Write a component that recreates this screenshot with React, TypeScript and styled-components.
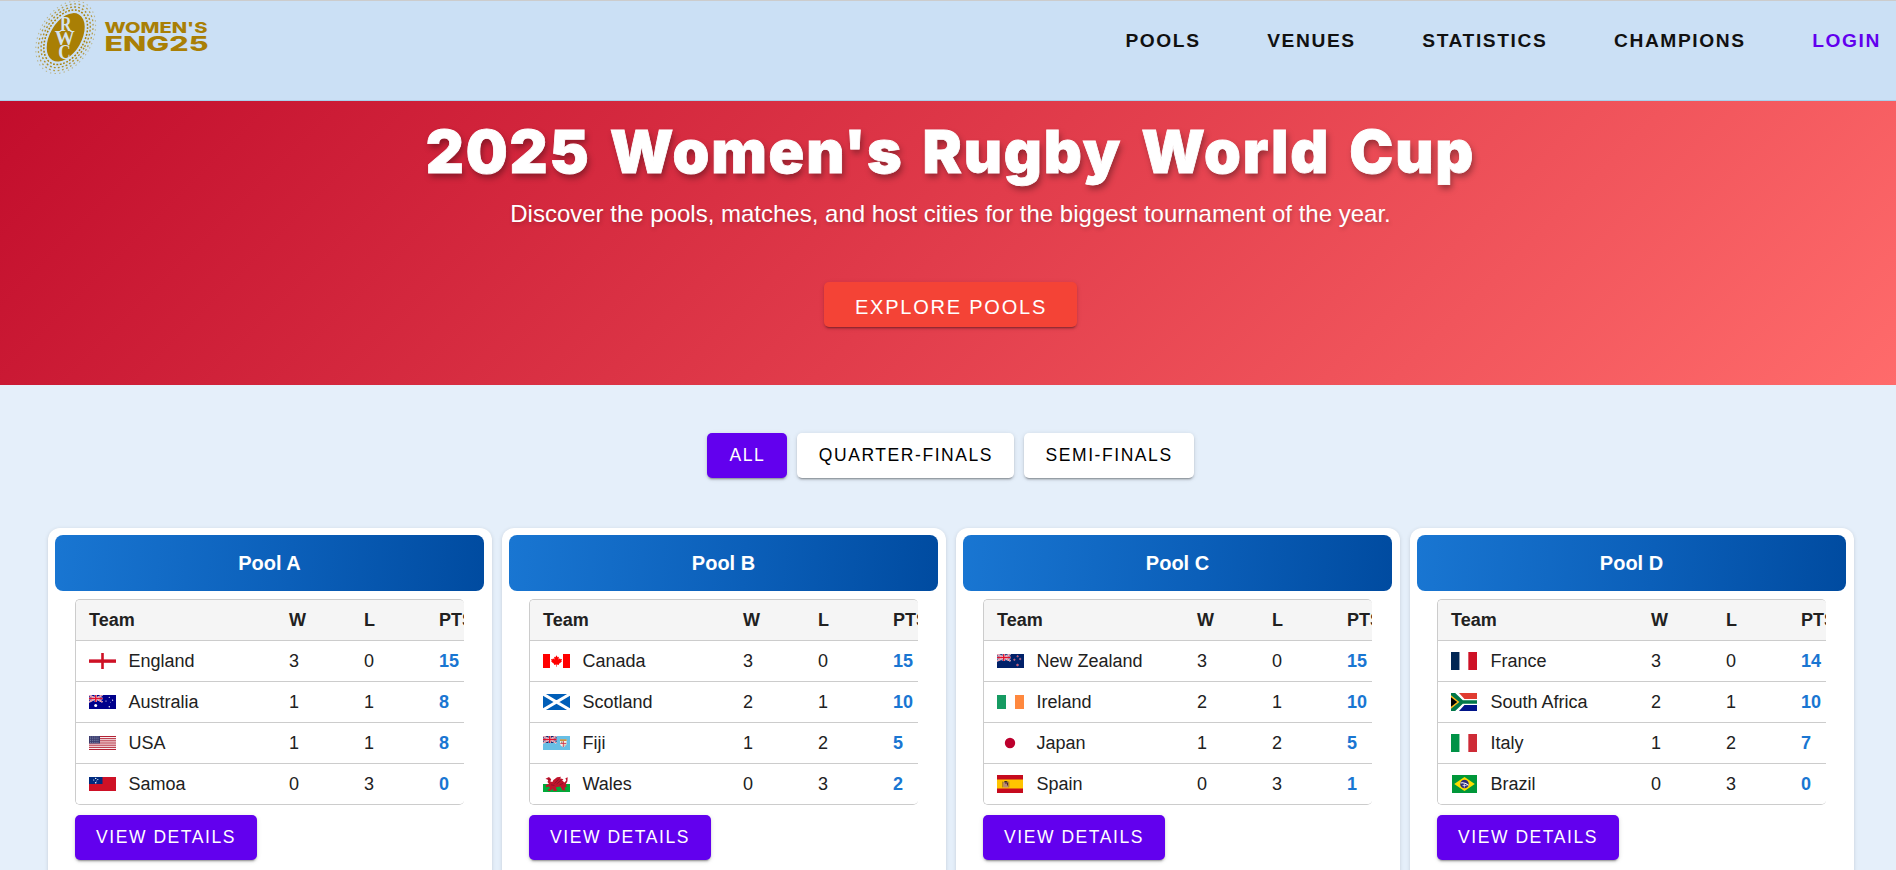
import React from 'react';
import styled, { createGlobalStyle } from 'styled-components';

const sans = `'Liberation Sans', Arial, Helvetica, sans-serif`;
const gold = '#a97f05';

const GlobalStyle = createGlobalStyle`
  *, *::before, *::after { box-sizing: border-box; }
  html, body { margin: 0; padding: 0; overflow: hidden; background: #e5effa; }
  body { font-family: ${sans}; color: #212121; }
`;

const Page = styled.div`
  width: 1901px;
  height: 870px;
  overflow: hidden;
  background: #e5effa;
`;

const Header = styled.header`
  display: flex;
  justify-content: space-between;
  align-items: flex-start;
  height: 101px;
  padding: 0 20px 0 33px;
  background: #cbe0f5;
  border-top: 1px solid #cccccc;
  border-bottom: 1px solid #a9d0ea;
`;

const Nav = styled.nav`
  display: flex;
  gap: 66.6px;
  padding-top: 26px;
`;

const NavLink = styled.a<{ $accent?: boolean }>`
  font-size: 19.2px;
  line-height: 27px;
  font-weight: 700;
  letter-spacing: 1.6px;
  color: ${(p) => (p.$accent ? '#6200ee' : '#111111')};
`;

const Hero = styled.section`
  display: flex;
  flex-direction: column;
  align-items: center;
  height: 284px;
  padding-top: 21px;
  color: #ffffff;
  background: linear-gradient(135deg, #c20d2c 0%, #e13c4b 50%, #ff6b6b 100%);
`;

const HeroTitle = styled.h1`
  margin: 0;
  font-family: Inter, ${sans};
  font-size: 59px;
  line-height: 60px;
  font-weight: 900;
  letter-spacing: 1.8px;
  word-spacing: 5.6px;
  white-space: nowrap;
  -webkit-text-stroke: 0.8px #ffffff;
  text-shadow: 2px 4px 6px rgba(0, 0, 0, 0.35);
`;

const HeroText = styled.p`
  margin: 17px 0 53px;
  font-size: 24px;
  line-height: 30px;
  white-space: nowrap;
  text-shadow: 1px 2px 4px rgba(0, 0, 0, 0.2);
`;

const buttonPadding = { hero: '5px 30px 0 31px', primary: '0 21px 1px', plain: '0 21px 1px 21.5px' };
const buttonFill = { hero: '#f44336', primary: '#6200ee', plain: '#ffffff' };

const Button = styled.button<{ $tone: 'primary' | 'plain' | 'hero' }>`
  height: 45px;
  border: 0;
  border-radius: 5px;
  padding: ${(p) => buttonPadding[p.$tone]};
  font-family: ${sans};
  font-size: ${(p) => (p.$tone === 'hero' ? '20px' : '17.5px')};
  letter-spacing: 0.0892857em;
  white-space: nowrap;
  color: ${(p) => (p.$tone === 'plain' ? '#000000' : '#ffffff')};
  background: ${(p) => buttonFill[p.$tone]};
  box-shadow: 0 3px 1px -2px rgba(0, 0, 0, 0.2), 0 2px 2px rgba(0, 0, 0, 0.14),
    0 1px 5px rgba(0, 0, 0, 0.12);
`;

const Filters = styled.div`
  display: flex;
  justify-content: center;
  gap: 10px;
  margin: 48px 0 50px;

  ${Button}:first-child { min-width: 80px; }
`;

const PoolGrid = styled.main`
  display: grid;
  grid-template-columns: repeat(4, minmax(0, 1fr));
  gap: 10px;
  padding: 0 47px 0 48px;
`;

const Card = styled.article`
  height: 400px;
  padding: 7px 8px 0 7px;
  border-radius: 12px;
  background: #ffffff;
  box-shadow: 0 2px 1px -1px rgba(0, 0, 0, 0.1), 0 1px 1px rgba(0, 0, 0, 0.08),
    0 1px 4px rgba(0, 0, 0, 0.12);
`;

const CardTitle = styled.h2`
  margin: 0;
  height: 56px;
  border-radius: 8px;
  font-size: 20px;
  line-height: 56px;
  font-weight: 700;
  text-align: center;
  color: #ffffff;
  background: linear-gradient(95deg, #1976d2, #0b5fb9 55%, #004ba0);
`;

const CardBody = styled.div`
  padding: 8px 20px 0;
`;

const Table = styled.div`
  height: 206px;
  margin-bottom: 10px;
  overflow: hidden;
  border: 1px solid #cccccc;
  border-right: 0;
  border-radius: 5px;
`;

const Row = styled.div<{ $head?: boolean }>`
  display: grid;
  grid-template-columns: 200px 75px 75px 75px;
  align-items: center;
  width: 425px;
  height: 41px;
  font-size: 18px;
  font-weight: ${(p) => (p.$head ? 700 : 400)};
  background: ${(p) => (p.$head ? '#f5f5f5' : '#ffffff')};
  border-bottom: 1px solid #cccccc;

  &:last-child { height: 40px; border-bottom: 0; }
`;

const Cell = styled.span<{ $points?: boolean }>`
  display: flex;
  align-items: center;
  padding-left: 13px;
  line-height: 40px;
  white-space: nowrap;
  ${(p) => p.$points && 'color: #1976d2; font-weight: 700;'}
`;

const FlagSlot = styled.span`
  display: flex;
  width: 39.4px;
`;

const Wordmark = () => (
  <svg width="180" height="78" viewBox="33 1 180 78" fill="none">
    <g transform="translate(65.7 37.3) rotate(30)" stroke={gold}>
      <ellipse rx="15.8" ry="26.4" fill={gold} stroke="none" />
      <ellipse rx="18.6" ry="29.6" strokeWidth="1.5" strokeDasharray="1.8 1.6" />
      <ellipse rx="21.2" ry="32.8" strokeWidth="1.4" strokeDasharray="1.9 2.1" opacity=".85" />
      <ellipse rx="23.8" ry="36" strokeWidth="1.3" strokeDasharray="1.8 2.6" opacity=".7" />
      <ellipse rx="26.2" ry="39" strokeWidth="1" strokeDasharray="1.4 3.2" opacity=".45" />
    </g>
    <g fill="#d5e3ee" fontFamily="'Liberation Serif', serif" fontWeight="700" fontSize="21">
      <text x="60" y="30.8" textLength="11.5" lengthAdjust="spacingAndGlyphs">R</text>
      <text x="54.7" y="45.3" textLength="20" lengthAdjust="spacingAndGlyphs">W</text>
      <text x="58.2" y="59.4" textLength="12.5" lengthAdjust="spacingAndGlyphs">C</text>
    </g>
    <g fill={gold} fontFamily="Inter, sans-serif" fontWeight="800">
      <text x="104.5" y="33.2" fontSize="14.4" textLength="103" lengthAdjust="spacingAndGlyphs">WOMEN'S</text>
      <text x="104.5" y="50.7" fontSize="20.3" textLength="104" lengthAdjust="spacingAndGlyphs">ENG25</text>
    </g>
  </svg>
);

const UnionJack = ({ base }: { base: string }) => (
  <g>
    <rect width="13.5" height="7" fill={base} />
    <path d="M0 0 13.5 7M13.5 0 0 7" stroke="#fff" strokeWidth="1.6" />
    <path d="M0 0 13.5 7M13.5 0 0 7" stroke="#d8203c" strokeWidth=".6" />
    <path d="M6.75 0V7M0 3.5H13.5" stroke="#fff" strokeWidth="2.2" />
    <path d="M6.75 0V7M0 3.5H13.5" stroke="#e0102c" strokeWidth="1.4" />
  </g>
);

const Tricolour = ({ colors, w, h }: { colors: string[]; w: number; h: number }) => (
  <g>
    {colors.map((c, i) => (
      <rect key={i} x={(i * w) / 3} width={w / 3} height={h} fill={c} />
    ))}
  </g>
);

const flags: Record<string, { w: number; h: number; art: React.ReactNode }> = {
  England: {
    w: 27, h: 16,
    art: <><rect width="27" height="16" fill="#fff" /><path d="M0 8H27" stroke="#e0697a" strokeWidth="4" /><path d="M0 8.2H27M13.5 0V16" stroke="#ce1124" strokeWidth="2.6" /></>,
  },
  Australia: {
    w: 27, h: 14,
    art: <><rect width="27" height="14" fill="#00008b" /><UnionJack base="#00008b" />
      <g fill="#fff"><circle cx="6.7" cy="10.5" r="1.5" /><circle cx="20.3" cy="2.3" r=".6" /><circle cx="17" cy="6" r=".6" /><circle cx="23.6" cy="5.2" r=".6" /><circle cx="21.5" cy="7.2" r=".4" /><circle cx="20.3" cy="11.7" r=".7" /></g></>,
  },
  USA: {
    w: 27, h: 14,
    art: <><rect width="27" height="14" fill="#fff" />
      {[0, 1, 2, 3, 4, 5, 6].map((i) => <rect key={i} y={i * 2.154} width="27" height="1.077" fill="#b22234" />)}
      <rect width="11" height="7.5" fill="#3c3b6e" />
      {[1, 2.8, 4.6, 6.4].map((y) => <path key={y} d={`M1 ${y}H10.4`} stroke="#a9c0d6" strokeWidth=".7" strokeDasharray=".8 1.1" />)}</>,
  },
  Samoa: {
    w: 27, h: 14,
    art: <><rect width="27" height="14" fill="#ce1126" /><rect width="13.5" height="7" fill="#002b7f" />
      <g fill="#fff"><circle cx="6.7" cy="1.4" r=".7" /><circle cx="4.7" cy="3" r=".6" /><circle cx="8.8" cy="2.6" r=".6" /><circle cx="7.6" cy="4" r=".4" /><circle cx="6.7" cy="5.7" r=".8" /></g></>,
  },
  Canada: {
    w: 27, h: 14,
    art: <><rect width="27" height="14" fill="#fff" /><path d="M0 0H7V14H0ZM20 0H27V14H20Z" fill="#f00" />
      <path d="M13.5 1.2 14.6 3.3 15.9 2.8 15.5 5.6 17 4.3 17.3 5.2 19 5 18.3 7 18.9 7.5 15.8 9.9 16.1 10.9 13.8 10.6V12.8H13.2V10.6L10.9 10.9 11.2 9.9 8.1 7.5 8.7 7 8 5 9.7 5.2 10 4.3 11.5 5.6 11.1 2.8 12.4 3.3Z" fill="#f00" /></>,
  },
  Scotland: {
    w: 27, h: 16,
    art: <><rect width="27" height="16" fill="#005eb8" /><path d="M0 0 27 16M27 0 0 16" stroke="#fff" strokeWidth="3" /></>,
  },
  Fiji: {
    w: 27, h: 14,
    art: <><rect width="27" height="14" fill="#68bfe5" /><UnionJack base="#17256b" />
      <path d="M17 3.4H23.6V8Q23.4 10 20.3 11.2 17.2 10 17 8Z" fill="#f4efe6" /><path d="M17 3.3H23.6V5H17Z" fill="#c9913e" /><path d="M20.3 5V11M17.3 7.4H23.3" stroke="#ce3045" strokeWidth=".9" /><circle cx="18.7" cy="6.1" r=".7" fill="#47794b" /><circle cx="22" cy="9" r=".6" fill="#8a6a42" /></>,
  },
  Wales: {
    w: 27, h: 16,
    art: <><rect width="27" height="8" fill="#fff" /><rect y="8" width="27" height="8" fill="#00ab39" />
      <path d="M2.5 2.8 6 1.1 8.2 3.2 7.3 5.6 9.4 6.1 10.4 4.1 14 1.3 18.2.8 17 2.3 20.4 3.2 19.2 4.4 21.5 6.4 23.3 4.4 22.4 2.3 24.7 1.2 24.4 5.2 22.8 8.2 23.8 10.6 21.5 12 22.8 14.4 19.4 14.2 17.4 10.6 12.8 11.2 14.1 14.8 10.3 15 10 12.7 6.8 15 4.2 14.3 7 12.5 6.2 10.5 3.2 11.2 2.7 9.3 6 8 4.5 6 5.2 4.1Z" fill="#c0142c" />
      <path d="M11.5 7.5 15.8 3.3M13.6 8 18 4.4M16.5 8.8 20 7.4M8 8.8 11.5 9.4M5 3.2H7" stroke="#701028" strokeWidth=".6" /></>,
  },
  'New Zealand': {
    w: 27, h: 14,
    art: <><rect width="27" height="14" fill="#012169" /><UnionJack base="#33478a" />
      <g fill="#d8405c" stroke="#e9a3b4" strokeWidth=".4"><circle cx="20.6" cy="2.3" r=".8" /><circle cx="17.4" cy="5.7" r=".8" /><circle cx="23.2" cy="5" r=".8" /><circle cx="20.5" cy="11" r="1" /></g></>,
  },
  Ireland: { w: 27, h: 14, art: <Tricolour w={27} h={14} colors={['#169b62', '#ffffff', '#ff883e']} /> },
  Japan: { w: 27, h: 18, art: <><rect width="27" height="18" fill="#fff" /><circle cx="13" cy="9" r="5.2" fill="#bc002d" /></> },
  Spain: {
    w: 26, h: 18,
    art: <><rect width="26" height="18" fill="#c60b1e" /><rect y="4.5" width="26" height="9" fill="#ffc400" />
      <rect x="6.2" y="7" width="5.2" height="5.6" rx="1" fill="#b98a75" /><path d="M5.7 6.5V12.4M11.8 6.5V12.4" stroke="#8c6a2a" strokeWidth=".8" /><path d="M6.5 7.2Q8.8 4.7 11.2 7.2Z" fill="#222" /><path d="M8 8H10.5V10.5" stroke="#4c2032" strokeWidth="1" fill="none" /></>,
  },
  France: { w: 26, h: 18, art: <Tricolour w={26} h={18} colors={['#002654', '#ffffff', '#ce1126']} /> },
  'South Africa': {
    w: 26, h: 18,
    art: <><rect width="26" height="9" fill="#e03c31" /><rect y="9" width="26" height="9" fill="#001489" />
      <path d="M2 -2 12 9 2 20M12 9H27" stroke="#fff" strokeWidth="6.2" fill="none" />
      <path d="M0 0V18L10 9Z" fill="#007749" /><path d="M0 -1.5 11 9 0 19.5M11 9H27" stroke="#007749" strokeWidth="3.6" fill="none" />
      <path d="M0 2.2 8.4 9 0 15.8Z" fill="#ffb81c" /><path d="M0 4.3 6.2 9 0 13.7Z" fill="#000" /></>,
  },
  Italy: { w: 26, h: 18, art: <Tricolour w={26} h={18} colors={['#009246', '#ffffff', '#ce2b37']} /> },
  Brazil: {
    w: 26, h: 18,
    art: <><rect x="1" width="25" height="18" fill="#009739" /><path d="M3.2 9 13.5 2 23.8 9 13.5 16Z" fill="#fedd00" /><circle cx="13.5" cy="9" r="4.3" fill="#2d2a78" />
      <path d="M9.6 8Q14 6.8 17.6 10.4" stroke="#fff" strokeWidth="1.1" fill="none" /><path d="M11.5 10.6H15.6M13.3 9V12.6" stroke="#fff" strokeWidth=".7" /></>,
  },
};

const Flag = ({ team }: { team: string }) => {
  const { w, h, art } = flags[team];
  return <svg width={w} height={h} viewBox={`0 0 ${w} ${h}`}>{art}</svg>;
};

type Standing = [team: string, wins: number, losses: number, points: number];

const pools: { name: string; teams: Standing[] }[] = [
  { name: 'Pool A', teams: [['England', 3, 0, 15], ['Australia', 1, 1, 8], ['USA', 1, 1, 8], ['Samoa', 0, 3, 0]] },
  { name: 'Pool B', teams: [['Canada', 3, 0, 15], ['Scotland', 2, 1, 10], ['Fiji', 1, 2, 5], ['Wales', 0, 3, 2]] },
  { name: 'Pool C', teams: [['New Zealand', 3, 0, 15], ['Ireland', 2, 1, 10], ['Japan', 1, 2, 5], ['Spain', 0, 3, 1]] },
  { name: 'Pool D', teams: [['France', 3, 0, 14], ['South Africa', 2, 1, 10], ['Italy', 1, 2, 7], ['Brazil', 0, 3, 0]] },
];

export default function App() {
  return (
    <>
      <GlobalStyle />
      <Page>
        <Header>
          <Wordmark />
          <Nav>
            {['POOLS', 'VENUES', 'STATISTICS', 'CHAMPIONS'].map((item) => (
              <NavLink key={item}>{item}</NavLink>
            ))}
            <NavLink $accent>LOGIN</NavLink>
          </Nav>
        </Header>
        <Hero>
          <HeroTitle>2025 Women's Rugby World Cup</HeroTitle>
          <HeroText>Discover the pools, matches, and host cities for the biggest tournament of the year.</HeroText>
          <Button $tone="hero">EXPLORE POOLS</Button>
        </Hero>
        <Filters>
          <Button $tone="primary">ALL</Button>
          <Button $tone="plain">QUARTER-FINALS</Button>
          <Button $tone="plain">SEMI-FINALS</Button>
        </Filters>
        <PoolGrid>
          {pools.map((pool) => (
            <Card key={pool.name}>
              <CardTitle>{pool.name}</CardTitle>
              <CardBody>
                <Table>
                  <Row $head>
                    {['Team', 'W', 'L', 'PTS'].map((label) => (
                      <Cell key={label}>{label}</Cell>
                    ))}
                  </Row>
                  {pool.teams.map(([team, wins, losses, points]) => (
                    <Row key={team}>
                      <Cell>
                        <FlagSlot><Flag team={team} /></FlagSlot>
                        {team}
                      </Cell>
                      <Cell>{wins}</Cell>
                      <Cell>{losses}</Cell>
                      <Cell $points>{points}</Cell>
                    </Row>
                  ))}
                </Table>
                <Button $tone="primary">VIEW DETAILS</Button>
              </CardBody>
            </Card>
          ))}
        </PoolGrid>
      </Page>
    </>
  );
}
